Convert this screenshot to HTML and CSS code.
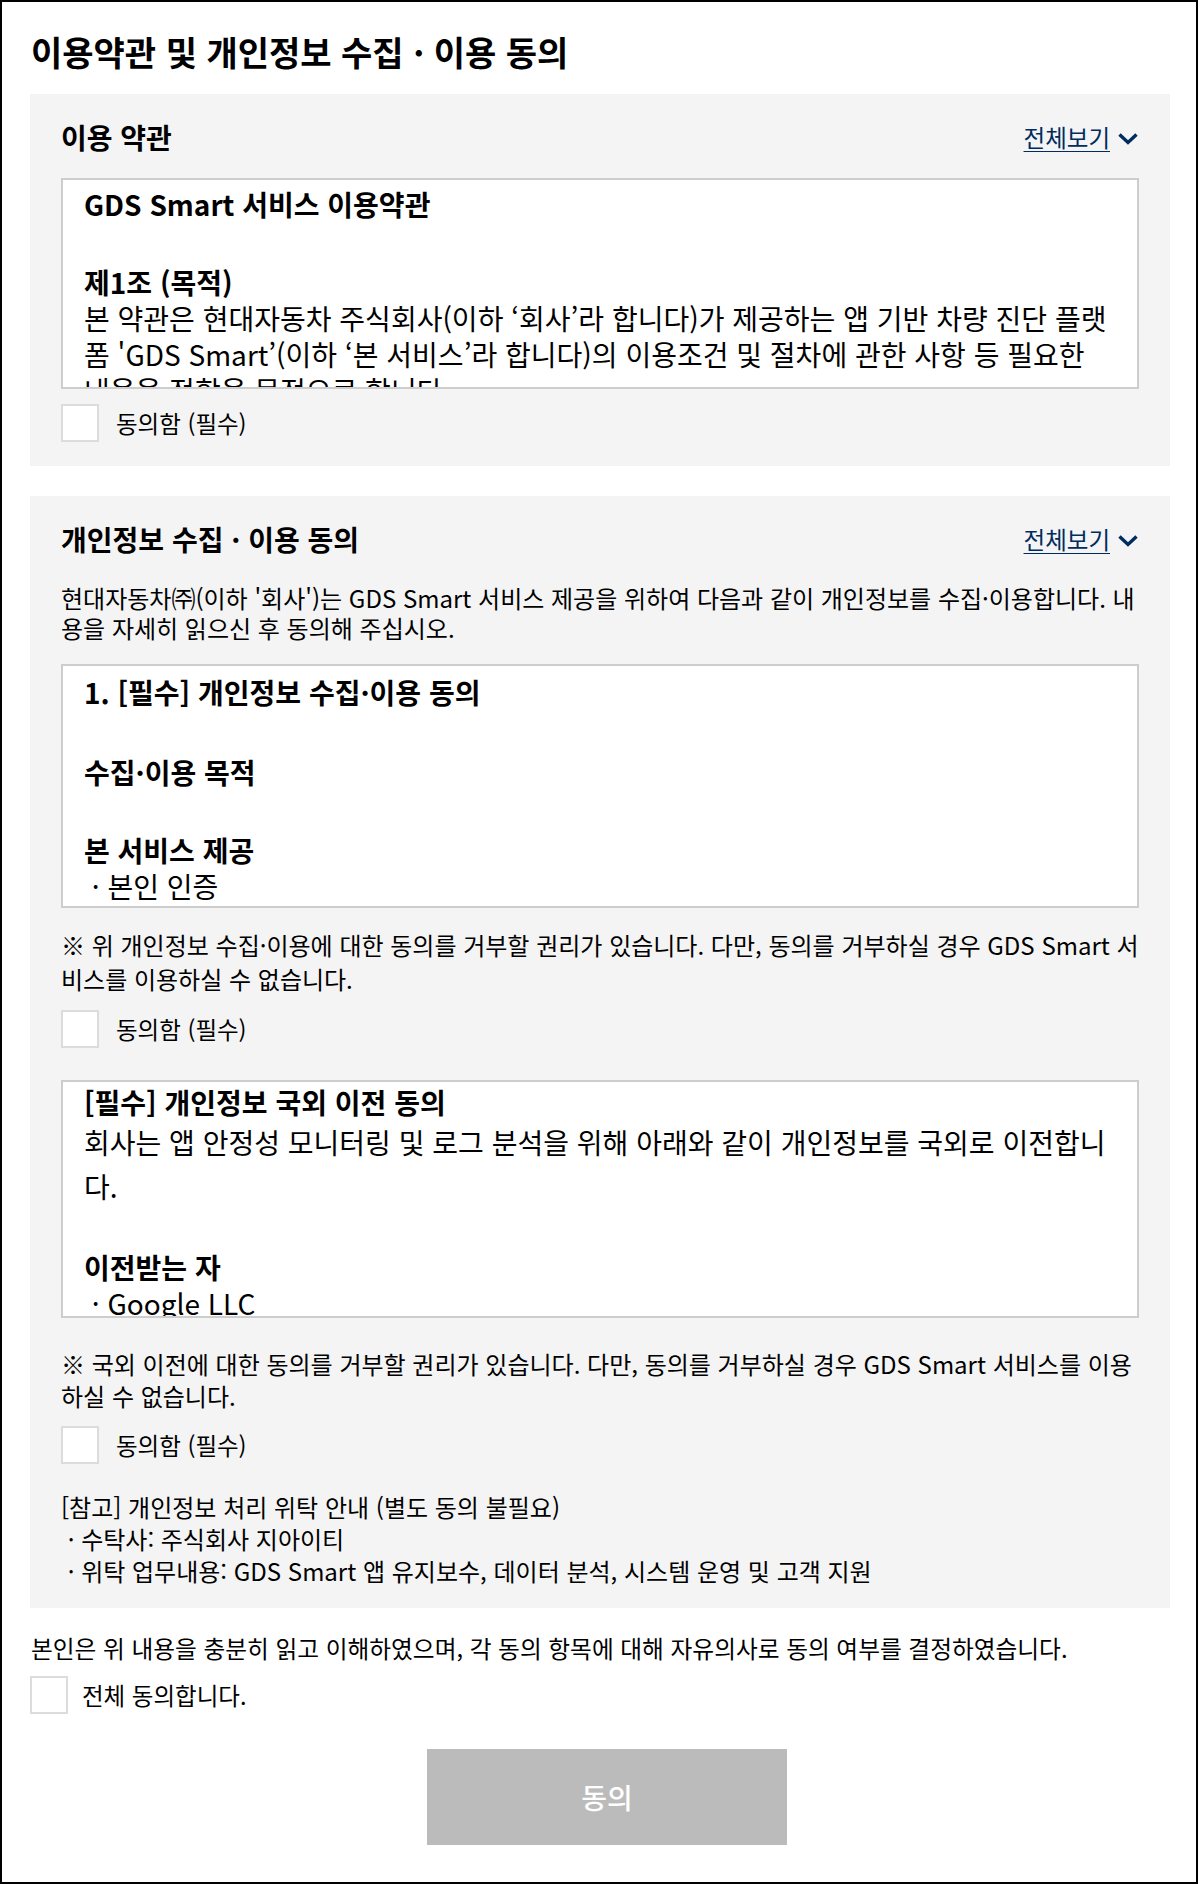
FILE: index.html
```html
<!DOCTYPE html>
<html lang="ko">
<head>
<meta charset="utf-8">
<title>이용약관 및 개인정보 수집 · 이용 동의</title>
<link rel="stylesheet" href="styles.css">
</head>
<body>
<div class="frame">
  <h1 class="page-title">이용약관 및 개인정보 수집 · 이용 동의</h1>

  <section class="panel">
    <div class="panel-head">
      <h2 class="panel-title">이용 약관</h2>
      <a class="view-all" href="#">전체보기<svg class="chev" width="22" height="13" viewBox="0 0 22 13" aria-hidden="true"><path d="M2.5 2.5 L11 10.5 L19.5 2.5" fill="none" stroke="#002c5f" stroke-width="3.4" stroke-linejoin="miter"/></svg></a>
    </div>
    <div class="doc doc-terms">
      <div class="doc-strong">GDS Smart 서비스 이용약관</div>
      <div class="doc-block">
        <div class="doc-strong">제1조 (목적)</div>
        <p class="doc-text">본 약관은 현대자동차 주식회사(이하 ‘회사’라 합니다)가 제공하는 앱 기반 차량 진단 플랫<br>폼 'GDS Smart’(이하 ‘본 서비스’라 합니다)의 이용조건 및 절차에 관한 사항 등 필요한<br>내용을 정함을 목적으로 합니다.</p>
      </div>
    </div>
    <label class="check check-first"><input type="checkbox" class="box"><span>동의함 (필수)</span></label>
  </section>

  <section class="panel panel-privacy">
    <div class="panel-head">
      <h2 class="panel-title">개인정보 수집 · 이용 동의</h2>
      <a class="view-all" href="#">전체보기<svg class="chev" width="22" height="13" viewBox="0 0 22 13" aria-hidden="true"><path d="M2.5 2.5 L11 10.5 L19.5 2.5" fill="none" stroke="#002c5f" stroke-width="3.4" stroke-linejoin="miter"/></svg></a>
    </div>
    <p class="small intro">현대자동차㈜(이하 '회사')는 GDS Smart 서비스 제공을 위하여 다음과 같이 개인정보를 수집·이용합니다. 내<br>용을 자세히 읽으신 후 동의해 주십시오.</p>

    <div class="doc doc-privacy">
      <div class="doc-strong">1. [필수] 개인정보 수집·이용 동의</div>
      <div class="doc-block doc-block-a">
        <div class="doc-strong">수집·이용 목적</div>
      </div>
      <div class="doc-block">
        <div class="doc-strong">본 서비스 제공</div>
        <p class="doc-text">&nbsp;· 본인 인증</p>
      </div>
    </div>
    <p class="small notice">※ 위 개인정보 수집·이용에 대한 동의를 거부할 권리가 있습니다. 다만, 동의를 거부하실 경우 GDS Smart 서<br>비스를 이용하실 수 없습니다.</p>
    <label class="check check-after"><input type="checkbox" class="box"><span>동의함 (필수)</span></label>

    <div class="doc doc-transfer">
      <div class="doc-strong">[필수] 개인정보 국외 이전 동의</div>
      <p class="doc-text doc-loose">회사는 앱 안정성 모니터링 및 로그 분석을 위해 아래와 같이 개인정보를 국외로 이전합니<br>다.</p>
      <div class="doc-block doc-block-b">
        <div class="doc-strong">이전받는 자</div>
        <p class="doc-text">&nbsp;· Google LLC</p>
      </div>
    </div>
    <p class="small notice notice-2">※ 국외 이전에 대한 동의를 거부할 권리가 있습니다. 다만, 동의를 거부하실 경우 GDS Smart 서비스를 이용<br>하실 수 없습니다.</p>
    <label class="check check-after"><input type="checkbox" class="box"><span>동의함 (필수)</span></label>

    <p class="small ref">[참고] 개인정보 처리 위탁 안내 (별도 동의 불필요)<br>&nbsp;· 수탁사: 주식회사 지아이티<br>&nbsp;· 위탁 업무내용: GDS Smart 앱 유지보수, 데이터 분석, 시스템 운영 및 고객 지원</p>
  </section>

  <p class="small statement">본인은 위 내용을 충분히 읽고 이해하였으며, 각 동의 항목에 대해 자유의사로 동의 여부를 결정하였습니다.</p>
  <label class="check check-all"><input type="checkbox" class="box"><span>전체 동의합니다.</span></label>

  <button class="submit" type="button">동의</button>
</div>
</body>
</html>
```

FILE: styles.css
```css
html, body {
  margin: 0;
  padding: 0;
  background: #fff;
}

.frame {
  box-sizing: border-box;
  width: 1198px;
  height: 1884px;
  border: 2px solid #000;
  padding: 0 26px 0 28px;
  overflow: hidden;
  font-family: "Noto Sans CJK KR", "Noto Sans", sans-serif;
  color: #000;
}

.page-title {
  margin: 30px 0 22px 1px;
  font-size: 34px;
  line-height: 40px;
  font-weight: 700;
}

.panel {
  background: #f4f4f4;
  padding: 25px 31px 24px;
}

.panel-privacy {
  margin-top: 30px;
  padding-bottom: 21px;
}

.panel-head {
  display: flex;
  justify-content: space-between;
  align-items: center;
  height: 36px;
}

.panel-title {
  margin: 0;
  font-size: 28px;
  line-height: 36px;
  font-weight: 700;
}

.view-all {
  display: inline-flex;
  align-items: center;
  gap: 7px;
  font-size: 23.5px;
  line-height: 30px;
  color: #002c5f;
  text-decoration: underline;
  text-decoration-thickness: 1px;
  text-underline-offset: 4px;
}

.chev {
  display: block;
  margin-top: 2px;
}

.doc {
  box-sizing: border-box;
  margin-top: 23px;
  background: #fff;
  border: 2px solid #cdcdcd;
  overflow: hidden;
  padding: 6px 10px 0 21px;
  font-size: 28px;
  line-height: 36px;
}

.doc-terms {
  height: 211px;
}

.doc-privacy {
  margin-top: 21px;
  height: 244px;
  padding-top: 8px;
}

.doc-transfer {
  margin-top: 32px;
  height: 238px;
  padding-top: 2px;
}

.doc-strong {
  font-weight: 700;
}

.doc-block {
  margin-top: 42px;
}

.doc-block-a {
  margin-top: 44px;
}

.doc-block-b {
  margin-top: 41px;
}

.doc-text {
  margin: 0;
  white-space: nowrap;
}

.doc-loose {
  line-height: 44px;
}

.small {
  margin: 0;
  font-size: 24px;
  line-height: 32px;
}

.intro {
  margin-top: 26px;
  margin-right: -20px;
  line-height: 30px;
  white-space: nowrap;
}

.notice {
  margin-top: 20px;
  margin-right: -20px;
  line-height: 34px;
  white-space: nowrap;
}

.notice-2 {
  margin-top: 30px;
  line-height: 32px;
}

.ref {
  margin-top: 27px;
}

.statement {
  margin-top: 24px;
  padding-left: 1px;
  font-size: 23.7px;
}

.check {
  display: flex;
  align-items: center;
  gap: 17px;
  font-size: 23.5px;
  line-height: 38px;
}

.check-first {
  margin-top: 15px;
}

.check-after {
  margin-top: 14px;
}

.check-all {
  margin-top: 12px;
  gap: 14px;
}

.box {
  appearance: none;
  -webkit-appearance: none;
  box-sizing: border-box;
  width: 38px;
  height: 38px;
  margin: 0;
  background: #fff;
  border: 2px solid #dcdcdc;
  border-radius: 0;
  flex: none;
}

.submit {
  display: block;
  width: 360px;
  height: 96px;
  margin: 35px 0 0 calc(50% - 173px);
  border: none;
  background: #bbbbbb;
  color: #fff;
  font-family: "Noto Sans CJK KR", "Noto Sans", sans-serif;
  font-size: 28px;
  font-weight: 500;
}
```
